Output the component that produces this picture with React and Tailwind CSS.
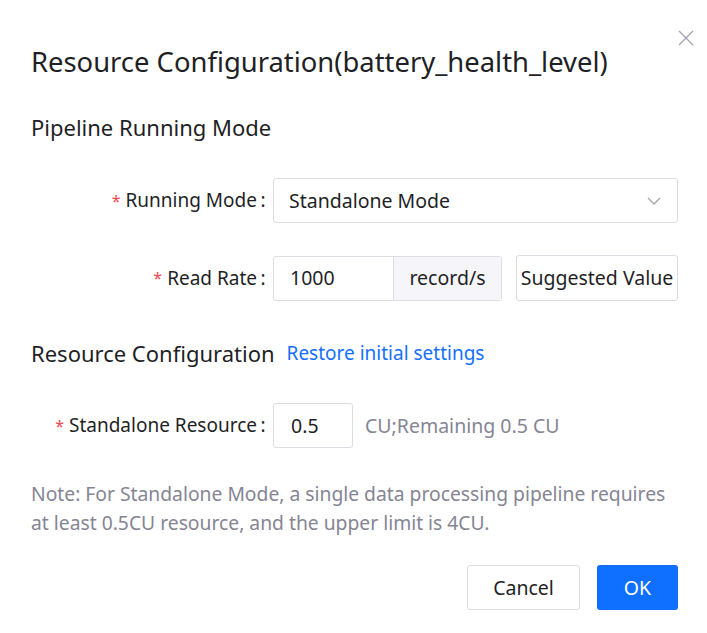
import React from 'react';

const font = { fontFamily: '"Noto Sans", "Noto Sans CJK SC", sans-serif' };

function Label({ children }) {
  return (
    <div className="w-[242px] shrink-0 pr-[4px] flex justify-end items-center text-[19px] text-[#1f1f26]">
      <span className="text-[#f5474f] mr-[5px] text-[16px]">*</span>
      <span>{children}</span>
      <span className="w-[12px] text-center">:</span>
    </div>
  );
}

export default function App() {
  return (
    <div style={font} className="w-[707px] h-[633px] bg-white pl-[31px] pr-[29px] relative">
      <button className="absolute right-[12px] top-[29px] text-[#a3a3b2]">
        <svg width="18" height="18" viewBox="0 0 18 18" fill="none" stroke="currentColor" strokeWidth="1.3">
          <path d="M2 2 L16 16 M16 2 L2 16" />
        </svg>
      </button>

      <h1 className="pt-[44px] text-[27.4px] leading-[36px] text-[#1f1f26]">
        Resource Configuration(battery_health_level)
      </h1>

      <h2 className="mt-[33px] text-[22px] leading-[28px] text-[#1f1f26]">Pipeline Running Mode</h2>

      <div className="mt-[37px] flex items-center">
        <Label>Running Mode</Label>
        <div className="flex-1 h-[45px] border border-[#dcdce3] rounded-[3px] flex items-center justify-between pl-[15px] pr-[16px] text-[19.5px] text-[#1f1f26]">
          <span>Standalone Mode</span>
          <svg width="14" height="10" viewBox="0 0 14 10" fill="none" stroke="#a3a3b2" strokeWidth="1.3">
            <path d="M1 2 L7 8 L13 2" />
          </svg>
        </div>
      </div>

      <div className="mt-[32px] flex items-center">
        <Label>Read Rate</Label>
        <div className="flex h-[45px] border border-[#dcdce3] rounded-[3px] text-[19.5px] text-[#1f1f26]">
          <div className="w-[119px] flex items-center pl-[16px]">1000</div>
          <div className="w-[108px] flex items-center justify-center bg-[#f5f5fa] border-l border-[#dcdce3]">record/s</div>
        </div>
        <button className="ml-auto w-[162px] h-[46px] border border-[#dcdce3] rounded-[3px] text-[19.5px] text-[#1f1f26] flex items-center justify-center whitespace-nowrap">
          Suggested Value
        </button>
      </div>

      <div className="mt-[38px] flex items-center h-[28px]">
        <span className="text-[22px] text-[#1f1f26]">Resource Configuration</span>
        <span className="ml-[12px] text-[19px] text-[#1470ff]">Restore initial settings</span>
      </div>

      <div className="mt-[36px] flex items-center">
        <Label>Standalone Resource</Label>
        <div className="w-[80px] h-[45px] border border-[#dcdce3] rounded-[3px] flex items-center pl-[17px] text-[19.5px] text-[#1f1f26]">
          0.5
        </div>
        <span className="ml-[12px] text-[19.5px] text-[#858594]">CU;Remaining 0.5 CU</span>
      </div>

      <p className="mt-[31px] text-[19.3px] leading-[29px] text-[#858594]">
        Note: For Standalone Mode, a single data processing pipeline requires at least 0.5CU resource, and the upper limit is 4CU.
      </p>

      <div className="mt-[28px] flex justify-end gap-[17px]">
        <button className="w-[113px] h-[45px] border border-[#dcdce3] rounded-[3px] text-[19.5px] text-[#1f1f26]">Cancel</button>
        <button className="w-[81px] h-[45px] rounded-[3px] bg-[#0f6fff] text-white text-[19.5px]">OK</button>
      </div>
    </div>
  );
}
